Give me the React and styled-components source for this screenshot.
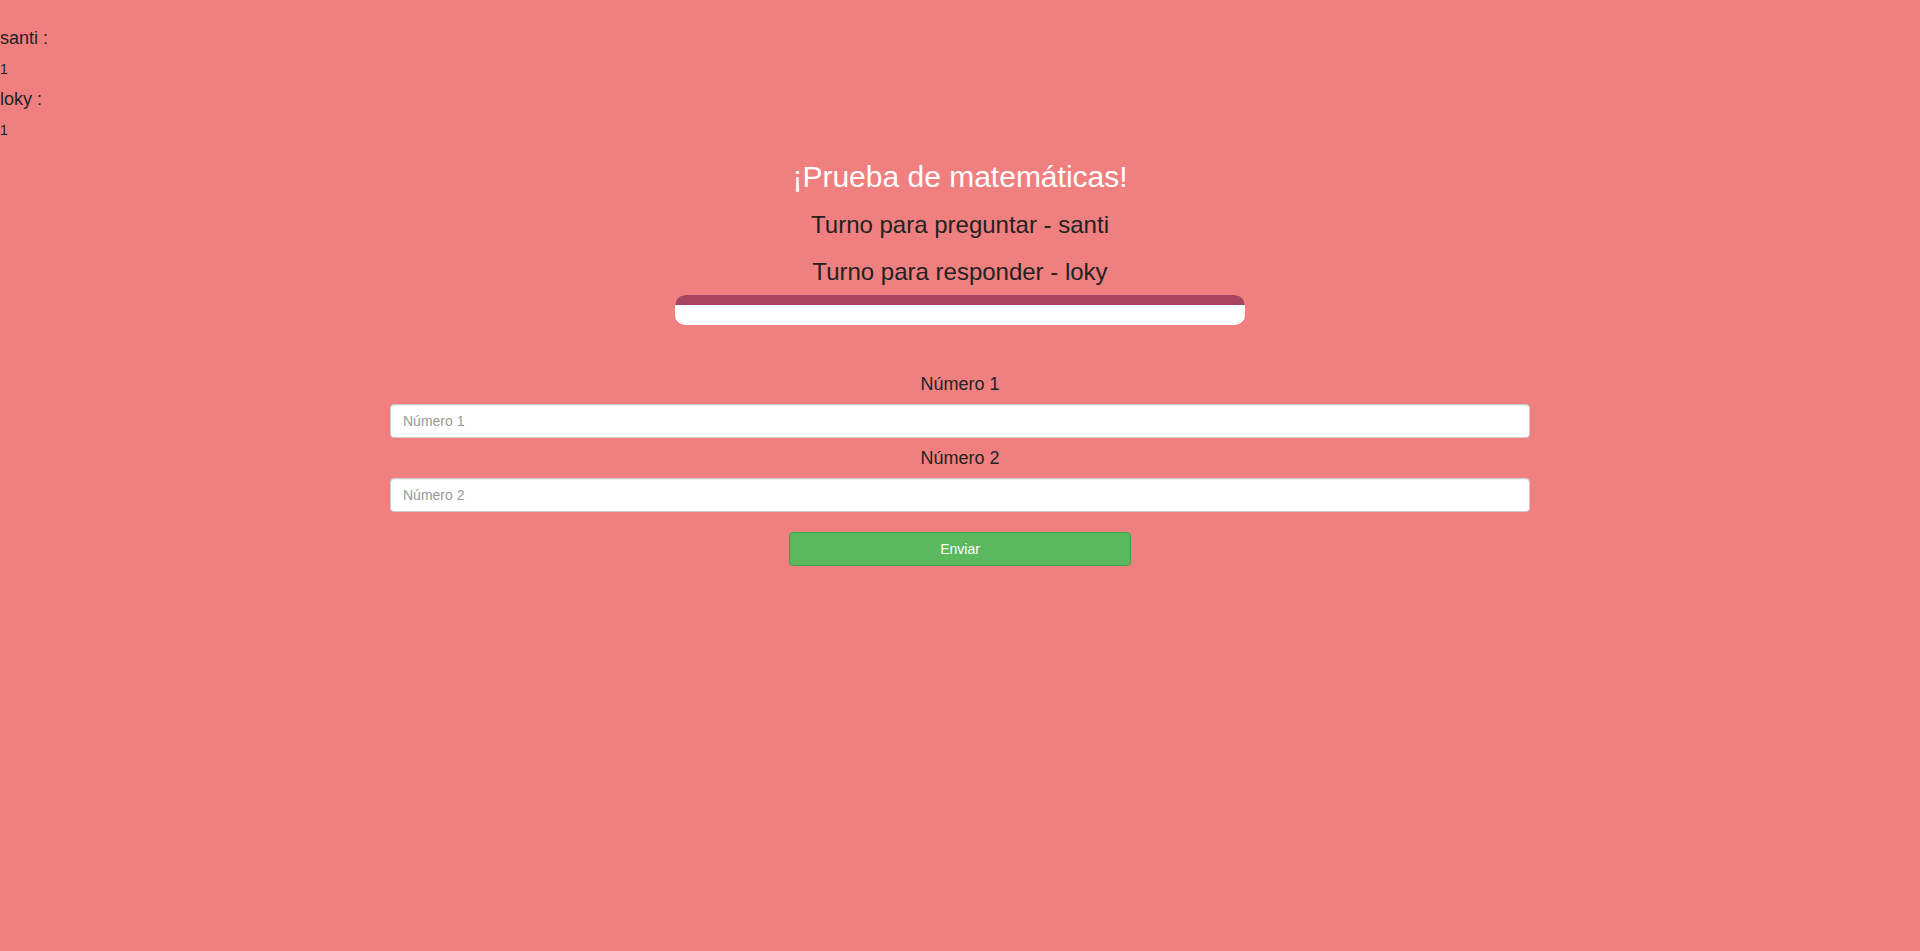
import React from 'react'
import styled, { createGlobalStyle } from 'styled-components';

const GlobalStyle = createGlobalStyle`
    * { box-sizing: border-box; }
    html, body {
        margin: 0;
        padding: 0;
        background: #f08080;
        font-family: "Liberation Sans", Arial, sans-serif;
        color: #222;
    }
    body { min-height: 951px; }
`;

const players = [
    { name: 'santi', score: 1 },
    { name: 'loky', score: 1 },
];

const App = () => {
    return (
        <>
            <GlobalStyle />
            <PageStyled>
                <ScoreBoard>
                    {players.map(p => (
                        <React.Fragment key={p.name}>
                            <PlayerName>{p.name} :</PlayerName>
                            <PlayerScore>{p.score}</PlayerScore>
                        </React.Fragment>
                    ))}
                </ScoreBoard>
                <Container>
                    <Title>¡Prueba de matemáticas!</Title>
                    <Turn $top="20px">Turno para preguntar - santi</Turn>
                    <Turn $top="20.5px">Turno para responder - loky</Turn>
                    <Progress>
                        <ProgressFill style={{ width: '100%' }} />
                    </Progress>
                    <Form>
                        <FieldLabel $top="49px">Número 1</FieldLabel>
                        <Input type="number" placeholder="Número 1" />
                        <FieldLabel $top="9.5px">Número 2</FieldLabel>
                        <Input type="number" placeholder="Número 2" />
                        <SubmitButton type="button">Enviar</SubmitButton>
                    </Form>
                </Container>
            </PageStyled>
        </>
    )
}

const PageStyled = styled.div`
    display: flow-root;
    min-height: 951px;
`;

const ScoreBoard = styled.div`
    padding-top: 18px;
    display: flow-root;
`;

const PlayerName = styled.h4`
    font-size: 18px;
    font-weight: 400;
    line-height: 20px;
    margin: 10px 0 11px;
`;

const PlayerScore = styled.p`
    font-size: 14px;
    line-height: 20px;
    margin: 0 0 10px;
`;

const Container = styled.div`
    width: 1170px;
    margin: 0 auto;
    padding: 0 15px;
    display: flex;
    flex-direction: column;
    align-items: center;
    text-align: center;
`;

const Title = styled.h3`
    margin: 12px 0 0;
    font-size: 30px;
    font-weight: 400;
    line-height: 30px;
    color: #fff;
`;

const Turn = styled.h4`
    margin: ${p => p.$top} 0 0;
    font-size: 24px;
    font-weight: 400;
    line-height: 26px;
`;

const Progress = styled.div`
    margin-top: 10px;
    width: 50%;
    height: 30px;
    background: #fff;
    border-radius: 10px;
    overflow: hidden;
`;

const ProgressFill = styled.div`
    height: 10px;
    background: #a84460;
`;

const Form = styled.form`
    width: 100%;
    display: flex;
    flex-direction: column;
    align-items: center;
`;

const FieldLabel = styled.label`
    display: block;
    margin: ${p => p.$top} 0 10.5px;
    font-size: 18px;
    line-height: 20px;
`;

const Input = styled.input`
    width: 100%;
    height: 34px;
    padding: 6px 12px;
    font-family: inherit;
    font-size: 14px;
    color: #555;
    background: #fff;
    border: 1px solid #ccc;
    border-radius: 4px;
    box-shadow: inset 0 1px 1px rgba(0, 0, 0, .075);
    outline: none;
    -moz-appearance: textfield;
    &::placeholder { color: #999; }
    &::-webkit-outer-spin-button,
    &::-webkit-inner-spin-button { -webkit-appearance: none; margin: 0; }
`;

const SubmitButton = styled.button`
    margin-top: 20px;
    width: 30%;
    height: 34px;
    font-family: inherit;
    font-size: 14px;
    color: #fff;
    background: #5cb85c;
    border: 1px solid #2ea84a;
    border-radius: 4px;
    cursor: pointer;
`;

export default App
